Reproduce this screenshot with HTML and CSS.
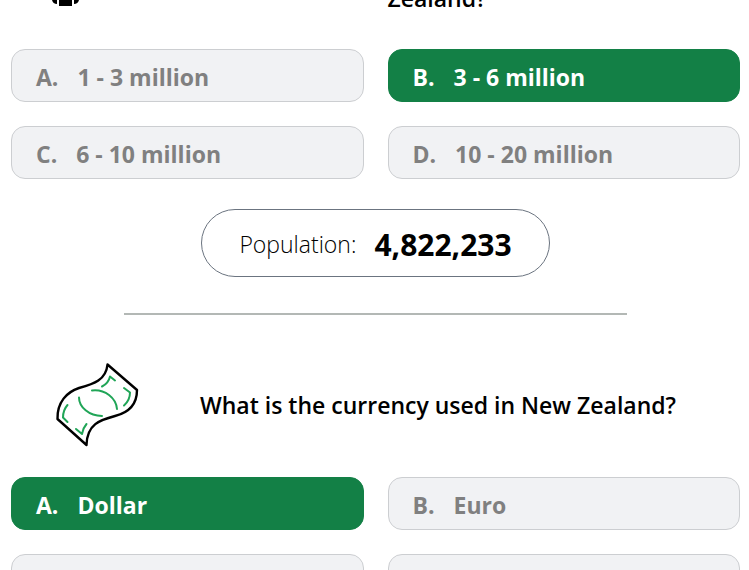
FILE: index.html
```html
<!DOCTYPE html>
<html lang="en">
<head>
<meta charset="utf-8">
<title>New Zealand quiz</title>
<link rel="stylesheet" href="styles.css">
</head>
<body>
<main class="quiz">
  <section class="card">
    <header class="peek">
      <svg class="people" viewBox="0 0 28 6" aria-hidden="true">
        <path d="M0 0H5V4Q1 4 0 0ZM7 0H20V6H7ZM22 0H27Q26 4 22 4Z"/>
      </svg>
      <h2 class="question">Zealand?</h2>
    </header>
    <div class="answers">
      <button class="answer" type="button"><span>A.</span><span>1 - 3 million</span></button>
      <button class="answer correct" type="button"><span>B.</span><span>3 - 6 million</span></button>
      <button class="answer" type="button"><span>C.</span><span>6 - 10 million</span></button>
      <button class="answer" type="button"><span>D.</span><span>10 - 20 million</span></button>
    </div>
    <p class="fact"><span>Population:</span><strong>4,822,233</strong></p>
  </section>
  <hr class="divider">
  <section class="card">
    <header class="prompt">
      <svg class="banknote" viewBox="0 0 105 100" aria-hidden="true">
        <path class="paper" d="M62.500 9.500L92 35C92 51 82 58 70 61C55 65 42 69 41.500 90L12.500 64C12 47 22 37 34 33C49 29 61 25 62.500 9.500Z"/>
        <path class="ink" d="M47 35.500C60 34 71 43 72 54M34 42.500C34 52 44 61 57 61M57 31.500C62 29 64 26 65 21.500L70 25.500M79 33L85 37.500C85 43 83 47 79 50.500M22.500 50C19 54 18 58 18 62.500L22.500 67M31 74L37 79Q38 73 41.500 69"/>
      </svg>
      <h2 class="question">What is the currency used in New Zealand?</h2>
    </header>
    <div class="answers">
      <button class="answer correct" type="button"><span>A.</span><span>Dollar</span></button>
      <button class="answer" type="button"><span>B.</span><span>Euro</span></button>
      <button class="answer" type="button" aria-label="C"></button>
      <button class="answer" type="button" aria-label="D"></button>
    </div>
  </section>
</main>
</body>
</html>
```
FILE: styles.css
```css
* {
  box-sizing: border-box;
}

body {
  margin: 0;
  height: 100vh;
  overflow: hidden;
  background: #fff;
  color: #000;
  font-family: "Open Sans", "Noto Sans", sans-serif;
}

.quiz {
  padding: 0 9px 0 11px;
}

.peek,
.answers {
  display: grid;
  grid-template-columns: 1fr 1fr;
  column-gap: 24px;
}

/* The first question is scrolled mostly out of view. */
.peek {
  margin-top: -18px;
  margin-bottom: 35px;
  align-items: end;
}

.people {
  width: 28px;
  height: 6px;
  margin: 0 0 8px 41px;
}

.question {
  margin: 0;
  font-size: 23px;
  line-height: 32px;
  font-weight: 600;
}

.answers {
  row-gap: 24px;
}

.answer {
  display: flex;
  align-items: center;
  gap: 19px;
  height: 53px;
  padding: 2px 24px 0;
  border: 1px solid #ccced1;
  border-radius: 14px;
  background: #f1f2f4;
  color: #808080;
  font: 700 23px/32px "Open Sans", "Noto Sans", sans-serif;
  text-align: left;
}

.correct {
  border-color: #138046;
  background: #138046;
  color: #fff;
}

.fact {
  display: flex;
  align-items: center;
  gap: 18px;
  width: fit-content;
  height: 68px;
  margin: 30px auto 36px;
  padding: 2px 37px 0;
  border: 1px solid #6b7480;
  border-radius: 34px;
  font-size: 23px;
  font-weight: 300;
}

.fact strong {
  font-size: 30px;
  font-weight: 700;
}

.divider {
  width: 69%;
  height: 2px;
  margin: 0 auto;
  border: 0;
  background: #b3b8b5;
}

.prompt {
  display: flex;
  align-items: center;
  height: 100px;
  margin: 40px 0 22px 34px;
}

.banknote {
  flex: none;
  width: 105px;
  height: 100px;
}

.banknote path {
  fill: none;
  stroke-linecap: round;
  stroke-linejoin: round;
}

.paper {
  stroke: #000;
  stroke-width: 2.4;
}

.ink {
  stroke: #20a557;
  stroke-width: 2;
}

.prompt .question {
  margin-left: 50px;
}
```
